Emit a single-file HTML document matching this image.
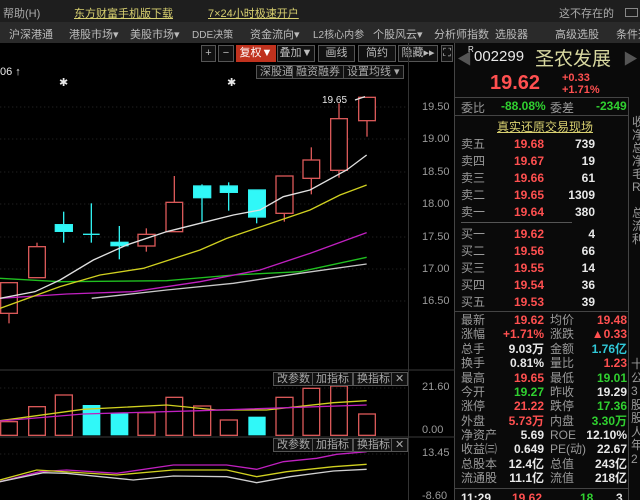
<!DOCTYPE html>
<html><head><meta charset="utf-8"><style>
*{margin:0;padding:0;box-sizing:border-box}
html,body{width:640px;height:500px;overflow:hidden}
body{background:#000;position:relative;font-family:"Liberation Sans","Noto Sans CJK SC",sans-serif;font-size:12px;color:#ccc}
.a{position:absolute;white-space:nowrap}
.r{color:#ff5050}.g{color:#30d030}.c{color:#30c8d8}.w{color:#e8e8e8}.l{color:#9a9a9a}
.btn{position:absolute;top:45px;height:17px;border:1px solid #555;color:#bbb;font-size:11px;line-height:15px;text-align:center;background:#111}
.b2{position:absolute;height:14px;border:1px solid #555;color:#aaa;font-size:11px;line-height:12px;padding:0 3px;background:#111}
.row{position:absolute;left:461px;font-weight:bold;font-size:12px;width:166px;height:17px;line-height:17px}
.row span{position:absolute}
.m{position:absolute;top:26px;color:#bbb;font-size:11px;white-space:nowrap}
</style></head><body>
<div class="a" style="left:0;top:0;width:640px;height:22px;background:#1e1e1e"></div>
<div class="a" style="left:3px;top:5px;color:#aaa;font-size:11px">帮助(H)</div>
<div class="a" style="left:74px;top:5px;color:#d8d070;text-decoration:underline;font-size:11px">东方财富手机版下载</div>
<div class="a" style="left:208px;top:5px;color:#d8d070;text-decoration:underline;font-size:11px">7×24小时极速开户</div>
<div class="a" style="left:559px;top:5px;color:#aaa;font-size:11px">这不存在的</div>
<div class="a" style="left:625px;top:8px;width:13px;height:9px;border:1px solid #888"></div>
<div class="a" style="left:0;top:22px;width:640px;height:21px;background:#2a2a2a"></div>
<div class="m" style="left:9px">沪深港通</div>
<div class="m" style="left:69px">港股市场▾</div>
<div class="m" style="left:130px">美股市场▾</div>
<div class="m" style="left:192px;font-size:10px">DDE决策</div>
<div class="m" style="left:250px">资金流向▾</div>
<div class="m" style="left:313px;font-size:10px">L2核心内参</div>
<div class="m" style="left:373px">个股风云▾</div>
<div class="m" style="left:434px">分析师指数</div>
<div class="m" style="left:495px">选股器</div>
<div class="m" style="left:555px">高级选股</div>
<div class="m" style="left:616px">条件选股</div>
<div class="btn" style="left:201px;width:15px">+</div>
<div class="btn" style="left:218px;width:16px">−</div>
<div class="btn" style="left:236px;width:40px;background:#c0321e;color:#fff;border-color:#c0321e">复权▼</div>
<div class="btn" style="left:277px;width:38px">叠加▼</div>
<div class="btn" style="left:318px;width:37px">画线</div>
<div class="btn" style="left:358px;width:38px">简约</div>
<div class="btn" style="left:398px;width:40px">隐藏▸▸</div>
<div class="btn" style="left:441px;width:12px">⛶</div>
<div class="b2" style="left:256px;top:65px">深股通</div>
<div class="b2" style="left:292px;top:65px">融资融券</div>
<div class="b2" style="left:343px;top:65px">设置均线 ▾</div>
<div class="a w" style="left:0;top:66px;font-size:11px">06 ↑</div>
<div class="a w" style="left:59px;top:76px;font-size:11px">✱</div>
<div class="a w" style="left:227px;top:76px;font-size:11px">✱</div>
<div class="a w" style="left:322px;top:95px;font-size:10px">19.65</div>
<div class="a" style="left:408px;top:43px;width:1px;height:457px;background:#333"></div>
<div class="a" style="left:454px;top:43px;width:1px;height:457px;background:#444"></div>
<div class="a l" style="left:422px;top:101px;font-size:11px">19.50</div>
<div class="a l" style="left:422px;top:133px;font-size:11px">19.00</div>
<div class="a l" style="left:422px;top:166px;font-size:11px">18.50</div>
<div class="a l" style="left:422px;top:198px;font-size:11px">18.00</div>
<div class="a l" style="left:422px;top:231px;font-size:11px">17.50</div>
<div class="a l" style="left:422px;top:263px;font-size:11px">17.00</div>
<div class="a l" style="left:422px;top:295px;font-size:11px">16.50</div>
<div class="a l" style="left:422px;top:381px;font-size:11px">21.60</div>
<div class="a l" style="left:422px;top:424px;font-size:11px">0.00</div>
<div class="a l" style="left:422px;top:447px;font-size:11px">13.45</div>
<div class="a l" style="left:422px;top:490px;font-size:11px">-8.60</div>
<svg class="a" style="left:0;top:90px" width="455" height="240" viewBox="0 0 1365 720" fill="none">
<g stroke="#2a2a2a" stroke-width="2" stroke-dasharray="4 8">
<line x1="0" y1="51" x2="1225" y2="51"/><line x1="0" y1="147" x2="1225" y2="147"/><line x1="0" y1="246" x2="1225" y2="246"/><line x1="0" y1="342" x2="1225" y2="342"/><line x1="0" y1="441" x2="1225" y2="441"/><line x1="0" y1="537" x2="1225" y2="537"/><line x1="0" y1="633" x2="1225" y2="633"/></g>
<g stroke="#d85858" stroke-width="4">
<line x1="27" y1="578" x2="27" y2="700"/><rect x="2" y="578" width="50" height="92" fill="#000"/>
<line x1="111" y1="458" x2="111" y2="563"/><rect x="86" y="470" width="50" height="93" fill="#000"/>
<line x1="439" y1="415" x2="439" y2="485"/><rect x="414" y="433" width="51" height="35" fill="#000"/>
<line x1="523" y1="258" x2="523" y2="425"/><rect x="498" y="337" width="50" height="88" fill="#000"/>
<line x1="853" y1="258" x2="853" y2="395"/><rect x="828" y="258" width="51" height="112" fill="#000"/>
<line x1="934" y1="172" x2="934" y2="313"/><rect x="909" y="210" width="50" height="55" fill="#000"/>
<line x1="1017" y1="40" x2="1017" y2="263"/><rect x="992" y="86" width="50" height="155" fill="#000"/>
<line x1="1101" y1="22" x2="1101" y2="140"/><rect x="1076" y="22" width="50" height="70" fill="#000"/>
</g>
<g stroke="#30f0f0" stroke-width="4" fill="#30f8f8">
<line x1="191" y1="365" x2="191" y2="458"/><rect x="166" y="404" width="51" height="20"/>
<line x1="274" y1="340" x2="274" y2="458"/><line x1="249" y1="433" x2="299" y2="433"/>
<line x1="358" y1="408" x2="358" y2="508"/><rect x="333" y="457" width="51" height="10"/>
<line x1="606" y1="283" x2="606" y2="395"/><rect x="581" y="288" width="51" height="35"/>
<line x1="686" y1="277" x2="686" y2="362"/><rect x="661" y="288" width="51" height="19"/>
<line x1="770" y1="300" x2="770" y2="400"/><rect x="746" y="300" width="50" height="81"/>
</g>
<g stroke-width="4">
<polyline stroke="#c8c8c8" points="275,625 500,600 700,580 900,550 1100,522"/>
<polyline stroke="#20c020" points="0,565 180,575 500,572 700,555 900,545 1100,502"/>
<polyline stroke="#c020c0" points="0,625 200,612 400,605 600,575 780,540 930,490 1100,428"/>
<polyline stroke="#d0d020" points="0,655 180,590 300,555 430,535 600,480 680,445 930,360 1020,315 1100,285"/>
<polyline stroke="#e0e0e0" points="0,625 105,605 180,570 280,510 380,465 500,425 600,400 700,375 780,360 850,320 930,300 1040,240 1100,195"/>
<polyline stroke="#e0e0e0" points="1065,30 1095,20"/>
</g>
</svg>
<svg class="a" style="left:0;top:360px" width="455" height="140" viewBox="0 0 1365 420" fill="none">
<line x1="0" y1="30" x2="1365" y2="30" stroke="#3a3a3a" stroke-width="3"/>
<line x1="0" y1="231" x2="1365" y2="231" stroke="#3a3a3a" stroke-width="3"/>
<g stroke="#2a2a2a" stroke-width="2" stroke-dasharray="4 8"><line x1="0" y1="84" x2="1225" y2="84"/><line x1="0" y1="282" x2="1225" y2="282"/></g>
<g stroke="#d85858" stroke-width="4" fill="none">
<rect x="2" y="185" width="50" height="41"/><rect x="86" y="140" width="50" height="86"/><rect x="166" y="105" width="51" height="121"/>
<rect x="414" y="158" width="51" height="68"/><rect x="498" y="112" width="50" height="114"/><rect x="581" y="138" width="51" height="88"/>
<rect x="661" y="180" width="51" height="46"/><rect x="828" y="112" width="51" height="114"/><rect x="909" y="85" width="50" height="141"/>
<rect x="992" y="78" width="50" height="148"/><rect x="1076" y="162" width="50" height="64"/></g>
<g fill="#30f8f8"><rect x="248" y="135" width="53" height="91"/><rect x="332" y="160" width="53" height="66"/><rect x="745" y="170" width="52" height="56"/></g>
<g stroke-width="4">
<polyline stroke="#d0d020" points="0,182 250,148 500,135 650,150 800,150 1000,128 1100,122"/>
<polyline stroke="#c020c0" points="0,183 250,162 600,152 1100,135"/>
<polyline stroke="#c020c0" points="0,365 120,335 200,330 350,340 520,315 680,315 770,328 850,305 950,295 1010,283 1100,275"/>
<polyline stroke="#d0d020" points="0,360 110,330 350,345 520,330 680,330 770,350 860,335 1000,320 1100,313"/>
<polyline stroke="#d0d0d0" points="0,365 130,338 200,340 400,360 520,348 680,350 770,368 870,350 1000,333 1100,328"/>
</g></svg>
<div class="b2" style="left:273px;top:372px">改参数</div><div class="b2" style="left:312px;top:372px">加指标</div><div class="b2" style="left:353px;top:372px">换指标</div><div class="b2" style="left:391px;top:372px">✕</div>
<div class="b2" style="left:273px;top:438px">改参数</div><div class="b2" style="left:312px;top:438px">加指标</div><div class="b2" style="left:353px;top:438px">换指标</div><div class="b2" style="left:391px;top:438px">✕</div>
<div class="a" style="left:455px;top:43px;width:185px;height:457px;background:#0a0a0a"></div>
<div class="a" style="left:457px;top:48px;font-size:15px;color:#555">◀</div>
<div class="a w" style="left:468px;top:45px;font-size:8px">R</div>
<div class="a w" style="left:474px;top:48px;font-size:15px">002299</div>
<div class="a" style="left:535px;top:44px;font-size:19px;color:#d8d8a0">圣农发展</div>
<div class="a" style="left:623px;top:48px;font-size:15px;color:#555">▶</div>
<div class="a r" style="left:490px;top:72px;font-size:20px;font-weight:bold">19.62</div>
<div class="a r" style="left:562px;top:72px;font-size:11px;font-weight:bold;line-height:12px">+0.33<br>+1.71%</div>
<div class="a" style="left:455px;top:97px;width:173px;height:1px;background:#444"></div>
<div class="a" style="left:455px;top:115px;width:173px;height:1px;background:#444"></div>
<div class="a" style="left:628px;top:97px;width:1px;height:403px;background:#444"></div>
<div class="a l" style="left:461px;top:99px">委比</div>
<div class="a g" style="left:501px;top:99px;font-weight:bold">-88.08%</div>
<div class="a l" style="left:550px;top:99px">委差</div>
<div class="a g" style="left:596px;top:99px;font-weight:bold">-2349</div>
<div class="a" style="left:497px;top:118px;color:#d8d070;text-decoration:underline">真实还原交易现场</div>
<div class="a" style="left:461px;top:222px;width:111px;height:1px;background:#555"></div>
<div class="row" style="top:136px"><span class="l" style="left:0;font-weight:normal">卖五</span><span class="r" style="right:83px">19.68</span><span class="w" style="right:32px">739</span></div>
<div class="row" style="top:153px"><span class="l" style="left:0;font-weight:normal">卖四</span><span class="r" style="right:83px">19.67</span><span class="w" style="right:32px">19</span></div>
<div class="row" style="top:170px"><span class="l" style="left:0;font-weight:normal">卖三</span><span class="r" style="right:83px">19.66</span><span class="w" style="right:32px">61</span></div>
<div class="row" style="top:187px"><span class="l" style="left:0;font-weight:normal">卖二</span><span class="r" style="right:83px">19.65</span><span class="w" style="right:32px">1309</span></div>
<div class="row" style="top:204px"><span class="l" style="left:0;font-weight:normal">卖一</span><span class="r" style="right:83px">19.64</span><span class="w" style="right:32px">380</span></div>
<div class="row" style="top:226px"><span class="l" style="left:0;font-weight:normal">买一</span><span class="r" style="right:83px">19.62</span><span class="w" style="right:32px">4</span></div>
<div class="row" style="top:243px"><span class="l" style="left:0;font-weight:normal">买二</span><span class="r" style="right:83px">19.56</span><span class="w" style="right:32px">66</span></div>
<div class="row" style="top:260px"><span class="l" style="left:0;font-weight:normal">买三</span><span class="r" style="right:83px">19.55</span><span class="w" style="right:32px">14</span></div>
<div class="row" style="top:277px"><span class="l" style="left:0;font-weight:normal">买四</span><span class="r" style="right:83px">19.54</span><span class="w" style="right:32px">36</span></div>
<div class="row" style="top:294px"><span class="l" style="left:0;font-weight:normal">买五</span><span class="r" style="right:83px">19.53</span><span class="w" style="right:32px">39</span></div>
<div class="a" style="left:455px;top:311px;width:173px;height:1px;background:#444"></div>
<div class="row" style="top:312px"><span class="l" style="left:0;font-weight:normal">最新</span><span class="r" style="right:83px">19.62</span><span class="l" style="left:89px;font-weight:normal">均价</span><span class="r" style="right:0">19.48</span></div>
<div class="row" style="top:326px"><span class="l" style="left:0;font-weight:normal">涨幅</span><span class="r" style="right:83px">+1.71%</span><span class="l" style="left:89px;font-weight:normal">涨跌</span><span class="r" style="right:0">▲0.33</span></div>
<div class="row" style="top:341px"><span class="l" style="left:0;font-weight:normal">总手</span><span class="w" style="right:83px">9.03万</span><span class="l" style="left:89px;font-weight:normal">金额</span><span class="c" style="right:0">1.76亿</span></div>
<div class="row" style="top:355px"><span class="l" style="left:0;font-weight:normal">换手</span><span class="w" style="right:83px">0.81%</span><span class="l" style="left:89px;font-weight:normal">量比</span><span class="r" style="right:0">1.23</span></div>
<div class="row" style="top:370px"><span class="l" style="left:0;font-weight:normal">最高</span><span class="r" style="right:83px">19.65</span><span class="l" style="left:89px;font-weight:normal">最低</span><span class="g" style="right:0">19.01</span></div>
<div class="row" style="top:384px"><span class="l" style="left:0;font-weight:normal">今开</span><span class="g" style="right:83px">19.27</span><span class="l" style="left:89px;font-weight:normal">昨收</span><span class="w" style="right:0">19.29</span></div>
<div class="row" style="top:398px"><span class="l" style="left:0;font-weight:normal">涨停</span><span class="r" style="right:83px">21.22</span><span class="l" style="left:89px;font-weight:normal">跌停</span><span class="g" style="right:0">17.36</span></div>
<div class="row" style="top:413px"><span class="l" style="left:0;font-weight:normal">外盘</span><span class="r" style="right:83px">5.73万</span><span class="l" style="left:89px;font-weight:normal">内盘</span><span class="g" style="right:0">3.30万</span></div>
<div class="row" style="top:427px"><span class="l" style="left:0;font-weight:normal">净资产</span><span class="w" style="right:83px">5.69</span><span class="l" style="left:89px;font-weight:normal">ROE</span><span class="w" style="right:0">12.10%</span></div>
<div class="row" style="top:441px"><span class="l" style="left:0;font-weight:normal">收益㈢</span><span class="w" style="right:83px">0.649</span><span class="l" style="left:89px;font-weight:normal">PE(动)</span><span class="w" style="right:0">22.67</span></div>
<div class="row" style="top:456px"><span class="l" style="left:0;font-weight:normal">总股本</span><span class="w" style="right:83px">12.4亿</span><span class="l" style="left:89px;font-weight:normal">总值</span><span class="w" style="right:0">243亿</span></div>
<div class="row" style="top:470px"><span class="l" style="left:0;font-weight:normal">流通股</span><span class="w" style="right:83px">11.1亿</span><span class="l" style="left:89px;font-weight:normal">流值</span><span class="w" style="right:0">218亿</span></div>
<div class="a" style="left:455px;top:488px;width:173px;height:1px;background:#444"></div>
<div class="a w" style="left:461px;top:491px;font-weight:bold">11:29</div>
<div class="a r" style="left:512px;top:491px;font-weight:bold">19.62</div>
<div class="a g" style="left:580px;top:491px;font-weight:bold">18</div>
<div class="a w" style="left:616px;top:491px;font-weight:bold">3</div>
<div class="a l" style="left:632px;top:116px;line-height:13px;font-size:12px">收<br>净<br>总<br>净<br>毛<br>R<br><br>总<br>流<br>利</div>
<div class="a l" style="left:631px;top:358px;line-height:13.5px;font-size:12px">十<br>公<br>3<br>股<br>股<br>人<br>年<br>2</div>
</body></html>
